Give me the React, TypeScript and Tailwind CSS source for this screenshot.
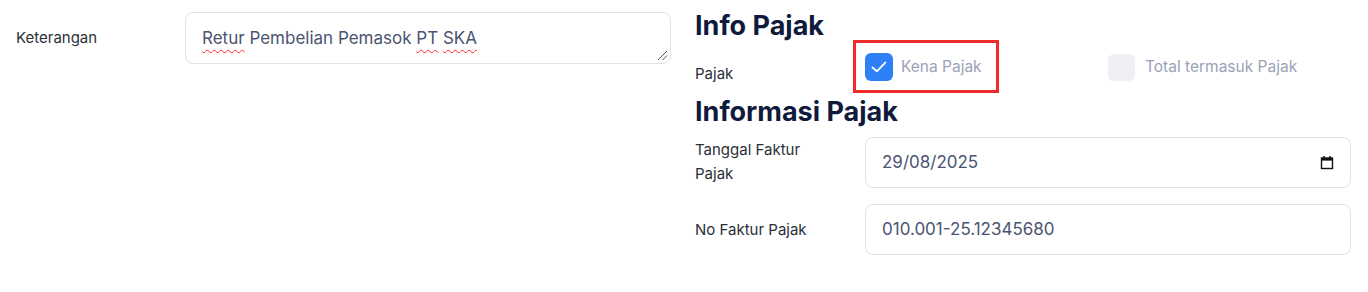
import React from "react";

const font = { fontFamily: "Inter, 'Noto Sans', sans-serif" };

function CalendarIcon() {
  return (
    <svg width="14" height="15" viewBox="0 0 14 15" fill="none">
      <rect x="1.5" y="3" width="11" height="10.5" stroke="#111" strokeWidth="1.4" fill="none" />
      <rect x="1.5" y="3" width="11" height="2.6" fill="#111" />
      <rect x="3.3" y="1" width="1.5" height="2.5" fill="#111" />
      <rect x="9.2" y="1" width="1.5" height="2.5" fill="#111" />
    </svg>
  );
}

function ResizeGrip() {
  return (
    <svg width="12" height="12" viewBox="0 0 12 12" className="absolute right-[2px] bottom-[2px]">
      <line x1="11" y1="2" x2="2" y2="11" stroke="#555" strokeWidth="1" />
      <line x1="11" y1="6.5" x2="6.5" y2="11" stroke="#555" strokeWidth="1" />
    </svg>
  );
}

export default function App() {
  return (
    <div className="w-[1368px] h-[292px] bg-white px-4 grid grid-cols-[655px_656px] gap-x-[24px]" style={font}>
      {/* Left column */}
      <div className="flex items-start pt-3">
        <div className="w-[169px] shrink-0 pt-[16px] text-[15px] leading-5 text-[#2b2f38]">Keterangan</div>
        <div className="relative flex-1 h-[52px] rounded-lg border border-[#dfe2ec] px-4 pt-[13px] text-[17px] leading-6 text-[#4a5472]">
          <span className="underline decoration-wavy decoration-[#ff2a2a] decoration-1 underline-offset-[5px]">Retur</span>{" "}
          Pembelian Pemasok{" "}
          <span className="underline decoration-wavy decoration-[#ff2a2a] decoration-1 underline-offset-[5px]">PT</span>{" "}
          <span className="underline decoration-wavy decoration-[#ff2a2a] decoration-1 underline-offset-[5px]">SKA</span>
          <ResizeGrip />
        </div>
      </div>

      {/* Right column */}
      <div className="flex flex-col">
        <h2 className="mt-[10px] text-[27px] leading-8 font-bold text-[#101a3c]">Info Pajak</h2>
        <div className="mt-[11px] h-7 flex items-start">
          <div className="w-[170px] shrink-0 pt-[11px] text-[15px] leading-5 text-[#2b2f38]">Pajak</div>
          <div className="flex-1 grid grid-cols-2">
            <div className="relative flex items-center gap-2">
              <div className="w-7 h-7 rounded-md bg-[#2d80f8] flex items-center justify-center">
                <svg width="18" height="18" viewBox="0 0 18 18" fill="none">
                  <path d="M2.5 9.5 L6.8 13.3 L15.3 4.6" stroke="white" strokeWidth="1.9" strokeLinecap="round" strokeLinejoin="round" />
                </svg>
              </div>
              <span className="text-[15.5px] leading-5 text-[#9ba2b8]">Kena Pajak</span>
              <div className="absolute left-[-12px] top-[-13px] w-[146px] h-[53px] border-[3px] border-[#f02a2a]" />
            </div>
            <div className="flex items-center gap-[10px]">
              <div className="w-[27px] h-[27px] rounded-md bg-[#eff0f4]" />
              <span className="text-[15.5px] leading-5 text-[#9ba2b8]">Total termasuk Pajak</span>
            </div>
          </div>
        </div>
        <h2 className="mt-[15px] text-[27px] leading-8 font-bold text-[#101a3c]">Informasi Pajak</h2>
        <div className="mt-[9px] flex items-start">
          <div className="w-[170px] shrink-0 pr-[40px] pt-[1px] text-[15px] leading-6 text-[#2b2f38]">Tanggal Faktur Pajak</div>
          <div className="flex-1 h-[51px] rounded-lg border border-[#dfe2ec] px-4 flex items-center justify-between text-[17px] text-[#4a5472]">
            <span>29/08/2025</span>
            <CalendarIcon />
          </div>
        </div>
        <div className="mt-[16px] flex items-center">
          <div className="w-[170px] shrink-0 text-[15px] leading-5 text-[#2b2f38]">No Faktur Pajak</div>
          <div className="flex-1 h-[51px] rounded-lg border border-[#dfe2ec] px-4 flex items-center text-[17px] text-[#4a5472]">
            010.001-25.12345680
          </div>
        </div>
      </div>
    </div>
  );
}
